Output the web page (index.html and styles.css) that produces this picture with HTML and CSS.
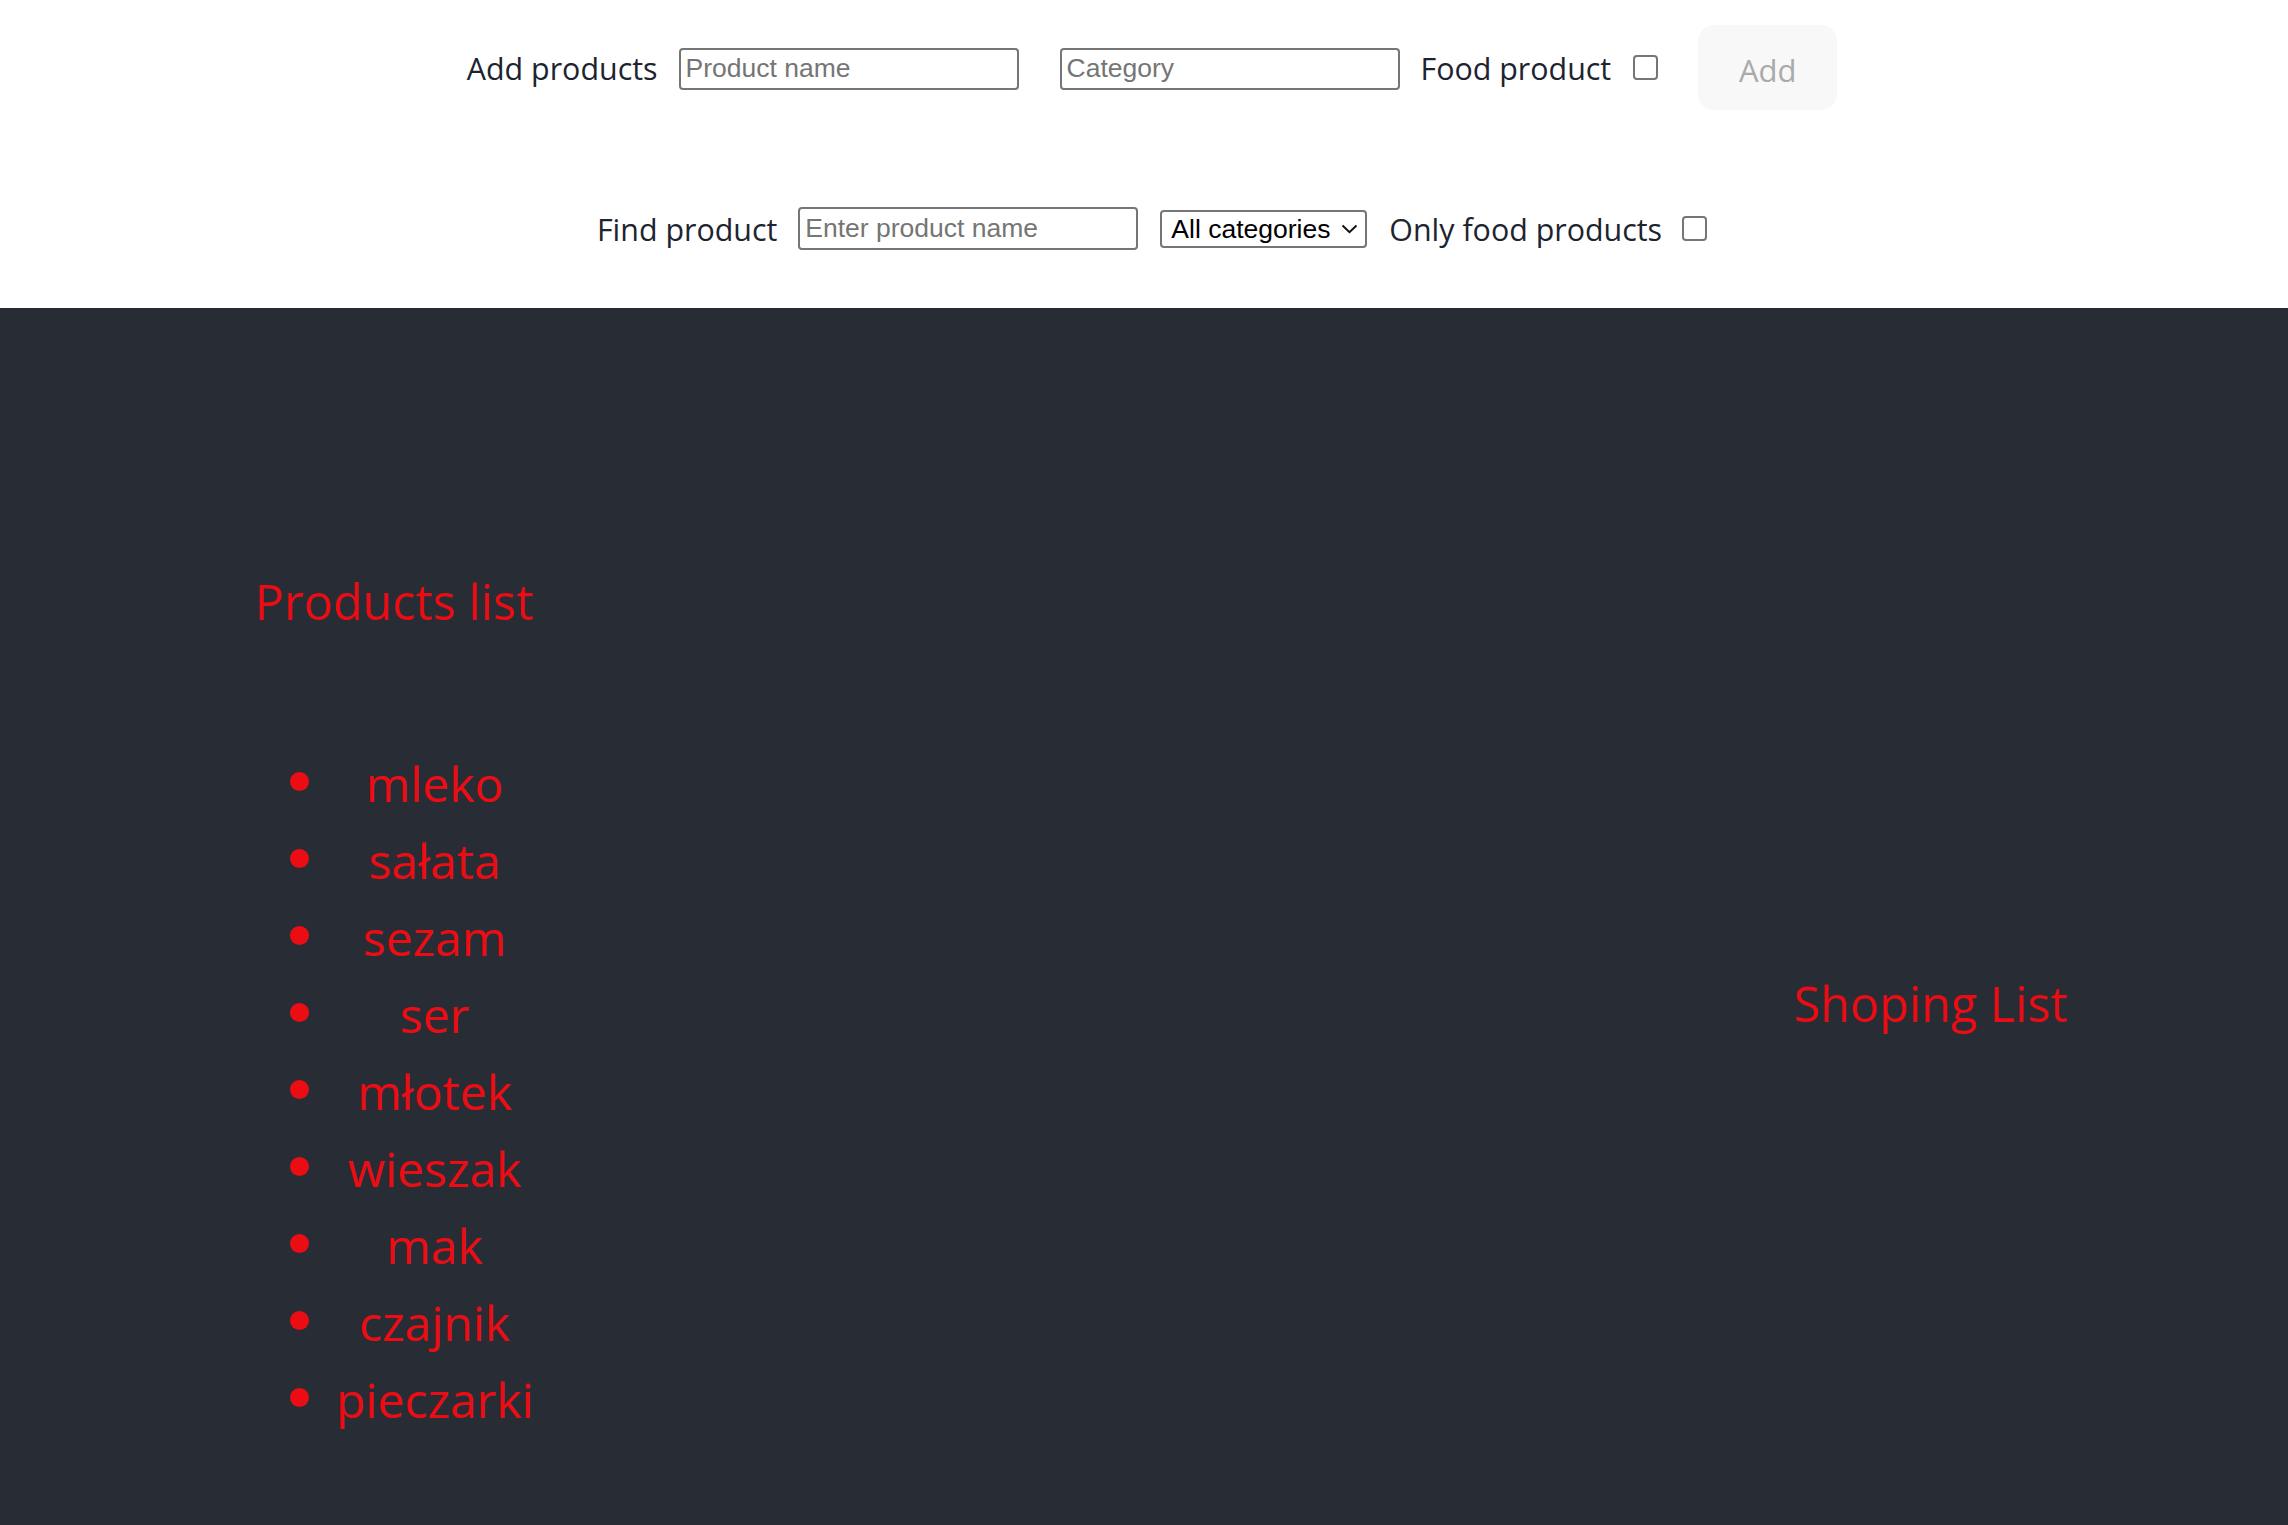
FILE: index.html
```html
<!DOCTYPE html>
<html lang="en">
<head>
<meta charset="utf-8">
<title>Shopping</title>
<link rel="stylesheet" href="styles.css">
</head>
<body>
<header class="top">
  <div class="row row-add">
    <span class="label">Add products</span>
    <input class="field gap-21" type="text" placeholder="Product name">
    <input class="field gap-41" type="text" placeholder="Category">
    <span class="label gap-21">Food product</span>
    <input class="check gap-22" type="checkbox">
    <button class="add-btn gap-40" type="button" disabled><span class="add-text">Add</span></button>
  </div>
  <div class="row row-find">
    <span class="label">Find product</span>
    <input class="field gap-21" type="text" placeholder="Enter product name">
    <span class="select-wrap gap-22">
      <select class="select">
        <option>All categories</option>
      </select>
      <svg class="chevron" width="17" height="10" viewBox="0 0 17 10" aria-hidden="true"><path d="M1.5 1.5 L8.5 8.2 L15.5 1.5" fill="none" stroke="#111" stroke-width="2"/></svg>
    </span>
    <span class="label gap-22">Only food products</span>
    <input class="check gap-20" type="checkbox">
  </div>
</header>
<main class="main">
  <section class="col col-products">
    <h2 class="heading products-heading">Products list</h2>
    <ul class="list">
      <li class="item">mleko</li>
      <li class="item">sałata</li>
      <li class="item">sezam</li>
      <li class="item">ser</li>
      <li class="item">młotek</li>
      <li class="item">wieszak</li>
      <li class="item">mak</li>
      <li class="item">czajnik</li>
      <li class="item">pieczarki</li>
    </ul>
  </section>
  <section class="col col-shopping">
    <h2 class="heading">Shoping List</h2>
  </section>
</main>
</body>
</html>
```

FILE: styles.css
```css
html, body {
  margin: 0;
  padding: 0;
}

body {
  font-family: "Open Sans", "Noto Sans", sans-serif;
  background: #282c34;
}

.top {
  background: #ffffff;
  padding: 25px 0 58px;
}

.row {
  display: flex;
  justify-content: center;
  align-items: center;
  padding-left: 16px;
}

.row-add {
  height: 84px;
}

.row-find {
  height: 43px;
  margin-top: 98px;
}

.label {
  font-size: 30.4px;
  color: #1d2430;
  line-height: 1.36;
  padding-top: 4px;
  white-space: nowrap;
}

.row-find .label {
  padding-top: 3px;
}

.gap-20 { margin-left: 20px; }
.gap-21 { margin-left: 21px; }
.gap-22 { margin-left: 22px; }
.gap-40 { margin-left: 40px; }
.gap-41 { margin-left: 41px; }

.field {
  box-sizing: border-box;
  width: 340px;
  height: 42px;
  margin-top: 0;
  margin-bottom: 0;
  padding: 2px 5px;
  border: 2px solid #767676;
  border-radius: 4px;
  font-family: "Liberation Sans", Arial, sans-serif;
  font-size: 26.5px;
  color: #111;
  background: #fff;
}

.row-add .field {
  margin-top: 3px;
}

.field::placeholder {
  color: #757575;
}

.row-find .field {
  height: 43px;
}

.select-wrap {
  position: relative;
  display: inline-flex;
}

.select {
  -webkit-appearance: none;
  appearance: none;
  box-sizing: border-box;
  width: 207px;
  height: 38px;
  margin: 0;
  padding: 0 30px 0 9px;
  border: 2px solid #767676;
  border-radius: 4px;
  background: #fff;
  color: #000;
  font-family: "Liberation Sans", Arial, sans-serif;
  font-size: 26.5px;
}

.chevron {
  position: absolute;
  right: 9px;
  top: 14px;
  pointer-events: none;
}

.check {
  -webkit-appearance: none;
  appearance: none;
  box-sizing: border-box;
  width: 25px;
  height: 25px;
  margin-top: 0;
  margin-bottom: 0;
  margin-right: 0;
  border: 2px solid #767676;
  border-radius: 4px;
  background: #fff;
}

.add-btn {
  box-sizing: border-box;
  width: 139px;
  height: 85px;
  border: none;
  border-radius: 16px;
  background: #f8f8f8;
  color: #aaaaaa;
  font-family: "Open Sans", "Noto Sans", sans-serif;
  font-size: 31px;
  padding: 0;
}

.add-text {
  display: inline-block;
  padding-top: 5px;
}

.main {
  display: flex;
  justify-content: space-between;
  align-items: center;
  min-height: 1389px;
  padding: 0 214px 0 255px;
  background: #282c34;
  color: #ec0d14;
}

.col {
  width: 280px;
}

.heading {
  margin: 0;
  font-size: 48.5px;
  font-weight: 400;
  line-height: 68px;
  white-space: nowrap;
}

.products-heading {
  margin-bottom: 110px;
}

.list {
  margin: 0;
  padding: 0;
  list-style: none;
  width: 278px;
}

.item {
  display: grid;
  grid-template-columns: 81px 1fr;
  align-items: center;
  font-size: 48px;
  line-height: 77px;
  text-align: center;
}

.item::before {
  content: "";
  width: 19px;
  height: 19px;
  margin-left: 35px;
  margin-top: -4px;
  border-radius: 50%;
  background: #ec0d14;
}
```
